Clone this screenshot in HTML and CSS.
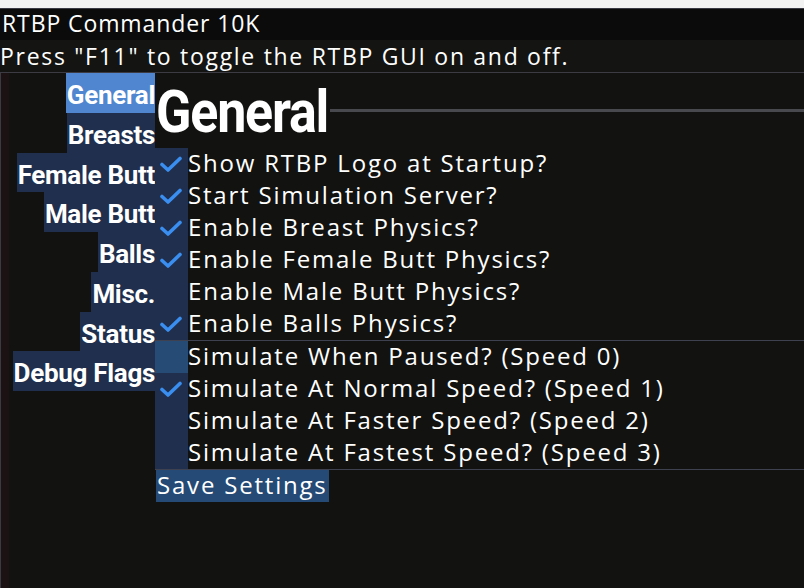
FILE: index.html
```html
<!DOCTYPE html>
<html>
<head>
<meta charset="utf-8">
<link rel="stylesheet" href="styles.css">
</head>
<body>
<div class="topstrip"></div>
<div class="titlebar">RTBP Commander 10K</div>
<div class="hint">Press "F11" to toggle the RTBP GUI on and off.</div>
<div class="main">
  <nav class="nav">
    <div class="nav-item active">General</div>
    <div class="nav-item">Breasts</div>
    <div class="nav-item">Female Butt</div>
    <div class="nav-item">Male Butt</div>
    <div class="nav-item">Balls</div>
    <div class="nav-item">Misc.</div>
    <div class="nav-item">Status</div>
    <div class="nav-item">Debug Flags</div>
  </nav>
  <section class="content">
    <div class="heading-row">
      <h1 class="heading">General</h1>
      <div class="heading-line"></div>
    </div>
    <div class="group">
      <div class="opt"><span class="check on"><svg viewBox="0 0 22 16"><path d="M2 8.5 L8 14 L20 2.5"/></svg></span><span class="label">Show RTBP Logo at Startup?</span></div>
      <div class="opt"><span class="check on"><svg viewBox="0 0 22 16"><path d="M2 8.5 L8 14 L20 2.5"/></svg></span><span class="label">Start Simulation Server?</span></div>
      <div class="opt"><span class="check on"><svg viewBox="0 0 22 16"><path d="M2 8.5 L8 14 L20 2.5"/></svg></span><span class="label">Enable Breast Physics?</span></div>
      <div class="opt"><span class="check on"><svg viewBox="0 0 22 16"><path d="M2 8.5 L8 14 L20 2.5"/></svg></span><span class="label">Enable Female Butt Physics?</span></div>
      <div class="opt"><span class="check"></span><span class="label">Enable Male Butt Physics?</span></div>
      <div class="opt"><span class="check on"><svg viewBox="0 0 22 16"><path d="M2 8.5 L8 14 L20 2.5"/></svg></span><span class="label">Enable Balls Physics?</span></div>
    </div>
    <div class="group sep">
      <div class="opt"><span class="check hover"></span><span class="label">Simulate When Paused? (Speed 0)</span></div>
      <div class="opt"><span class="check on"><svg viewBox="0 0 22 16"><path d="M2 8.5 L8 14 L20 2.5"/></svg></span><span class="label">Simulate At Normal Speed? (Speed 1)</span></div>
      <div class="opt"><span class="check"></span><span class="label">Simulate At Faster Speed? (Speed 2)</span></div>
      <div class="opt"><span class="check"></span><span class="label">Simulate At Fastest Speed? (Speed 3)</span></div>
    </div>
    <div class="actions sep">
      <button class="save">Save Settings</button>
    </div>
  </section>
</div>
</body>
</html>
```

FILE: styles.css
```css
html, body {
  margin: 0;
  padding: 0;
  height: 100%;
  background: #121210;
  color: #ffffff;
  font-family: "Open Sans", "Lato", sans-serif;
  overflow: hidden;
}

.topstrip {
  height: 8px;
  background: #f2f2f2;
  border-bottom: 1px solid #3a3a44;
}

.titlebar {
  height: 31px;
  line-height: 29px;
  background: #0b0b0b;
  font-size: 23px;
  letter-spacing: 0.9px;
  padding-left: 2px;
  white-space: nowrap;
}

.hint {
  height: 32px;
  line-height: 32px;
  background: #141412;
  border-bottom: 1px solid #3c3b44;
  font-size: 23px;
  letter-spacing: 1.7px;
  white-space: nowrap;
}

.main {
  display: flex;
  align-items: flex-start;
  height: 520px;
  background: linear-gradient(to right, #3a3a40 0, #3a3a40 1px, #1c1113 1px, #1c1113 9px, #121210 9px);
}

.nav {
  width: 155px;
  flex: none;
  display: flex;
  flex-direction: column;
  align-items: flex-end;
}

.nav-item {
  box-sizing: border-box;
  height: 39.75px;
  line-height: 33.75px;
  padding: 6px 0 0 1px;
  background: #1f2f4d;
  font-family: "Roboto", sans-serif;
  font-weight: bold;
  font-size: 26px;
  letter-spacing: -0.3px;
  white-space: nowrap;
}

.nav-item.active {
  background: #5086d0;
}

.content {
  flex: 1;
  min-width: 0;
}

.heading-row {
  height: 75px;
  display: flex;
  align-items: center;
}

.heading {
  margin: 0;
  padding: 8px 0 0 1px;
  font-family: "Roboto", sans-serif;
  font-weight: bold;
  font-size: 52px;
  letter-spacing: -1.2px;
  line-height: 60px;
  white-space: nowrap;
  transform: scaleY(1.13);
  transform-origin: 50% 80%;
}

.heading-line {
  flex: 1;
  height: 3px;
  background: #48484f;
  margin-left: 2px;
}

.group {
  display: flex;
  flex-direction: column;
}

.sep {
  border-top: 1px solid #3e4150;
}

.opt {
  display: flex;
  height: 32px;
  align-items: center;
}

.check {
  width: 33px;
  height: 32px;
  flex: none;
  background: #1f2f4d;
  display: flex;
  align-items: center;
  justify-content: center;
}

.check.hover {
  background: #264b75;
}

.check svg {
  width: 22px;
  height: 16px;
  margin-left: -2px;
  fill: none;
  stroke: #3a8ef0;
  stroke-width: 3.6;
  stroke-linecap: round;
  stroke-linejoin: round;
}

.label {
  font-size: 24px;
  letter-spacing: 1.8px;
  white-space: nowrap;
  padding-bottom: 3px;
}

.actions {
  display: flex;
}

.save {
  margin: 0 0 0 1px;
  padding: 0 1px 3px;
  height: 32px;
  border: 0;
  border-radius: 0;
  background: #244a75;
  color: #ffffff;
  font-family: "Open Sans", "Lato", sans-serif;
  font-size: 24px;
  letter-spacing: 1.8px;
  line-height: 29px;
}
```
